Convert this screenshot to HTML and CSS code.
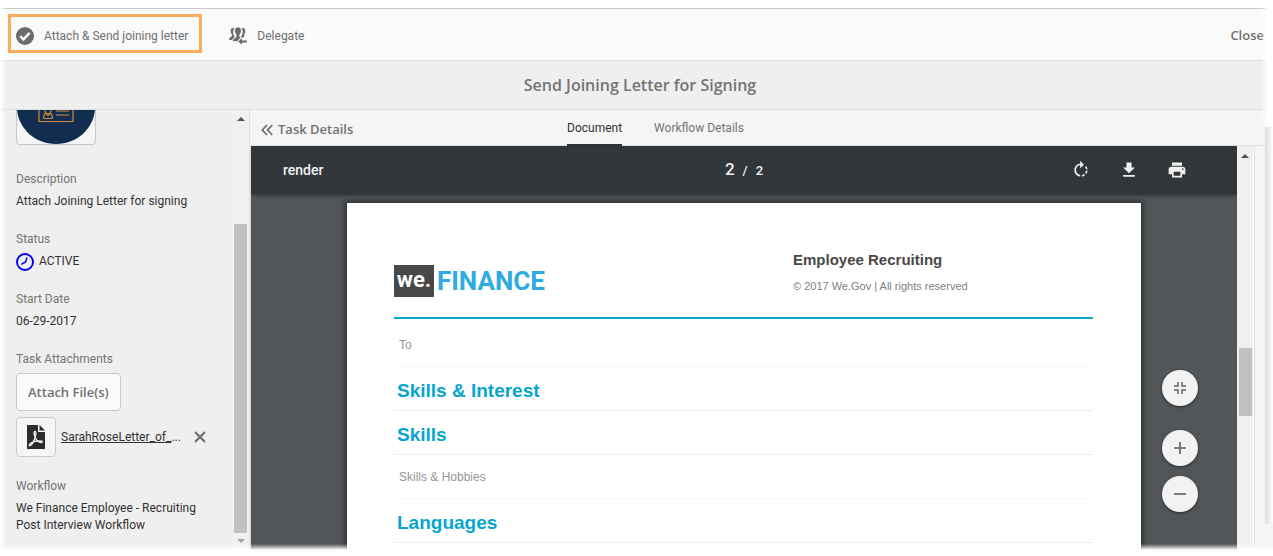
FILE: index.html
```html
<!DOCTYPE html>
<html lang="en">
<head>
<meta charset="utf-8">
<title>Send Joining Letter for Signing</title>
<link rel="stylesheet" href="styles.css">
</head>
<body>
<div class="app">
  <header class="actions">
    <button class="action action-highlight" type="button">
      <svg class="icon" viewBox="0 0 18 18" aria-hidden="true"><circle cx="9" cy="9" r="9" fill="#6b6b6b"/><path d="M4.2 9.2l3.2 3.2 6.3-6.6" fill="none" stroke="#fafafa" stroke-width="2.5"/></svg>
      <span>Attach &amp; Send joining letter</span>
    </button>
    <button class="action" type="button">
      <svg class="icon" viewBox="0 0 18 18" aria-hidden="true"><g fill="#6b6b6b"><path d="M4.500.8C2.600.8 1.500 2 1.700 4.200c.1 1.500.5 2.500 1.200 3.300.3 1.400-.2 2-1.200 2.500C.6 10.600.2 11.600 0 13h3.300c.5-1.600 1.700-2.200 2.600-2.800C4 7.800 3.400 4.200 5.200.9z"/><path d="M13.500.8c1.900 0 3 1.200 2.800 3.400-.1 1.500-.5 2.500-1.200 3.300-.2 1.100 0 1.700.6 2.100l-2.200 1.200-1.700-.8c1.900-2.200 2.700-5.900 1-9.100z"/><path d="M9 0c2.500 0 3.600 1.700 3.300 4.100-.2 1.700-.7 2.900-1.500 3.800-.3 1.400 0 2.200.9 2.700L8.500 14.500H3.600c.2-2 .6-2.700 1.900-3.300 1.300-.7 2-1.300 1.700-3.300-.8-.9-1.300-2.100-1.500-3.800C5.400 1.700 6.500 0 9 0z" stroke="#fafafa" stroke-width=".7"/><path d="M9 14.500l4-4v2.700h5v2.600h-5V18z" stroke="#fafafa" stroke-width=".4"/></g></svg>
      <span>Delegate</span>
    </button>
    <button class="close" type="button">Close</button>
  </header>

  <div class="title-bar"><h1>Send Joining Letter for Signing</h1></div>

  <div class="workspace">
    <aside class="sidebar">
      <div class="details">
        <div class="thumb">
          <svg viewBox="0 0 78 34" aria-hidden="true"><path d="M0 0h78C76 19 60 34 39 34S2 19 0 0z" fill="#112e51"/><g fill="none" stroke="#d9893a" stroke-width="1.200"><path d="M22 0v11.500h34V0M39 1h13M39 5h13"/><circle cx="31" cy="1" r="3"/><path d="M29 3.500c-3 1-2.500 4-2 5h8c.5-1 1-4-2-5l-2 2z"/></g></svg>
        </div>
        <section class="field">
          <h2>Description</h2>
          <p>Attach Joining Letter for signing</p>
        </section>
        <section class="field">
          <h2>Status</h2>
          <p class="status"><svg class="icon" viewBox="0 0 18 18" aria-hidden="true"><g fill="none" stroke="#0000f5"><circle cx="9" cy="9" r="8" stroke-width="1.900"/><path d="M11 4.500L9.600 9 5.300 11.300" stroke-width="1.500"/></g></svg>ACTIVE</p>
        </section>
        <section class="field">
          <h2>Start Date</h2>
          <p>06-29-2017</p>
        </section>
        <section class="field">
          <h2>Task Attachments</h2>
          <button class="attach" type="button">Attach File(s)</button>
          <div class="file">
            <span class="file-type"><svg viewBox="0 0 20 24" aria-hidden="true"><path d="M1 0h11v7h7v17H1z" fill="#2c2c2c"/><path d="M13.500 0L19 5.500h-5.500z" fill="#2c2c2c"/><path d="M8.600 6.500c2-.3 1.300 3.300.7 5.200-1 3.300-3 7.500-4.700 8.800-1.300.9-2-.6-.6-1.800 2.400-2 7.500-3.100 10.800-2.800 2.300.3 1.500 2-.3 1.500-2.300-.6-4.500-3.100-5.500-5.500-.7-1.800-1.200-5-.4-5.400z" fill="none" stroke="#f5f5f5" stroke-width="1.300"/></svg></span>
            <a class="file-name" href="#file"><u>SarahRoseLetter_of_</u>...</a>
            <button class="remove" type="button" aria-label="Remove attachment"><svg viewBox="0 0 12 12" aria-hidden="true"><path d="M1 1l10 10M11 1L1 11" stroke="#6b6b6b" stroke-width="2"/></svg></button>
          </div>
        </section>
        <section class="field">
          <h2>Workflow</h2>
          <p>We Finance Employee - Recruiting Post Interview Workflow</p>
        </section>
      </div>
      <div class="scroll scroll-side" aria-hidden="true">
        <svg viewBox="0 0 8 4"><path d="M0 4l4-4 4 4z" fill="#505050"/></svg>
        <div class="thumb-bar"></div>
        <svg viewBox="0 0 8 4"><path d="M0 0l4 4 4-4z" fill="#a3a3a3"/></svg>
      </div>
    </aside>

    <main class="main">
      <nav class="tabs">
        <a class="back" href="#details"><svg viewBox="0 0 12 12" aria-hidden="true"><path d="M6 1L1.300 6 6 11M11.300 1L6.600 6l4.700 5" fill="none" stroke="#6b6b6b" stroke-width="1.700"/></svg>Task Details</a>
        <div class="tab-list">
          <a class="tab tab-active" href="#document">Document</a>
          <a class="tab" href="#workflow">Workflow Details</a>
        </div>
      </nav>
      <div class="frame">
        <div class="viewer">
          <div class="toolbar">
            <span class="doc-name">render</span>
            <span class="pages"><b>2</b><span>/</span><span>2</span></span>
            <div class="tools">
              <button type="button" aria-label="Rotate"><svg viewBox="0 0 24 24"><path fill="#f1f1f1" d="M15.550 5.550L11 1v3.070C7.060 4.560 4 7.920 4 12s3.050 7.440 7 7.930v-2.020c-2.840-.48-5-2.940-5-5.910s2.160-5.430 5-5.910V10l4.550-4.450zM19.930 11c-.17-1.390-.72-2.730-1.620-3.890l-1.420 1.420c.54.75.88 1.600 1.020 2.470h2.020zM13 17.900v2.020c1.390-.17 2.740-.71 3.900-1.610l-1.440-1.440c-.75.54-1.590.89-2.460 1.030zm3.890-2.420l1.420 1.410c.9-1.160 1.450-2.500 1.620-3.890h-2.020c-.14.87-.48 1.720-1.020 2.480z"/></svg></button>
              <button type="button" aria-label="Download"><svg viewBox="0 0 24 24"><path fill="#f1f1f1" d="M19 9h-4V3H9v6H5l7 7 7-7zM5 18v2h14v-2H5z"/></svg></button>
              <button type="button" aria-label="Print"><svg viewBox="0 0 24 24"><path fill="#f1f1f1" d="M19 8H5c-1.660 0-3 1.340-3 3v6h4v4h12v-4h4v-6c0-1.660-1.340-3-3-3zm-3 11H8v-5h8v5zm3-7c-.55 0-1-.45-1-1s.45-1 1-1 1 .45 1 1-.45 1-1 1zm-1-9H6v4h12V3z"/></svg></button>
            </div>
          </div>
          <article class="sheet">
            <header class="letterhead">
              <div class="logo"><span class="logo-we">we.</span><span class="logo-name">FINANCE</span></div>
              <div class="org"><h2>Employee Recruiting</h2><p>© 2017 We.Gov | All rights reserved</p></div>
            </header>
            <p class="line line-to">To</p>
            <h3>Skills &amp; Interest</h3>
            <h3>Skills</h3>
            <p class="line">Skills &amp; Hobbies</p>
            <h3>Languages</h3>
          </article>
          <div class="zoom">
            <button class="zoom-fit" type="button" aria-label="Fit to page"><svg viewBox="0 0 12 12"><path d="M0 4h4V0M12 4H8V0M0 8h4v4M12 8H8v4" fill="none" stroke="#666" stroke-width="1.500"/></svg></button>
            <button type="button" aria-label="Zoom in"><svg viewBox="0 0 12 12"><path d="M0 6h12M6 0v12" stroke="#666" stroke-width="1.700"/></svg></button>
            <button type="button" aria-label="Zoom out"><svg viewBox="0 0 12 12"><path d="M0 6h12" stroke="#666" stroke-width="1.700"/></svg></button>
          </div>
        </div>
        <div class="scroll scroll-doc" aria-hidden="true">
          <svg viewBox="0 0 8 4"><path d="M0 4l4-4 4 4z" fill="#505050"/></svg>
          <div class="thumb-bar"></div>
        </div>
      </div>
    </main>
    <div class="edge"></div>
  </div>
  <div class="fade fade-left"></div>
  <div class="fade fade-right"></div>
  <div class="fade fade-bottom"></div>
</div>
</body>
</html>
```
FILE: styles.css
```css
* { box-sizing: border-box; }
body { margin: 0; background: #fff; color: #323232; font: 12px/17px Roboto, "Open Sans", sans-serif; }
h1, h2, h3, p { margin: 0; }
button { margin: 0; padding: 0; border: 0; background: none; color: inherit; font: inherit; }
a { color: inherit; text-decoration: none; }
svg { display: block; flex: none; }
.icon { width: 18px; height: 18px; }

.app { position: relative; height: 100vh; padding: 8px 0 6px; display: flex; flex-direction: column; }

.actions { flex: none; display: flex; align-items: center; height: 53px; padding: 0 9px 2px 8px; background: #fafafa; border-top: 1px solid #c8c8c8; border-bottom: 1px solid #dedede; color: #707070; }
.action { display: flex; align-items: center; gap: 10px; height: 39px; padding: 5px 3px 0; margin-left: 24px; }
.action-highlight { margin: 0; padding: 5px 11px 0 5px; border: 3px solid #fbad5b; }
.close, .back, .attach, .title-bar h1 { font-family: "Open Sans", "Noto Sans", sans-serif; font-weight: 600; }
.close { margin-left: auto; padding-top: 3px; font-size: 13px; }

.title-bar { flex: none; height: 49px; padding-left: 7px; display: flex; align-items: center; justify-content: center; background: #efefef; border-bottom: 1px solid #dedede; }
.title-bar h1 { font-size: 16px; line-height: 24px; color: #747474; }

.workspace { flex: 1; min-height: 0; display: flex; background: #f5f5f5; }
.sidebar { flex: none; width: 250px; display: flex; background: #efefef; border-right: 1px solid #dedede; overflow: hidden; }
.details { flex: 1; min-width: 0; padding: 0 32px 0 16px; }
.thumb { width: 80px; height: 35px; margin-bottom: 26px; border: 1px solid #c8c8c8; border-top: 0; border-radius: 0 0 4px 4px; background: #f5f5f5; }
.thumb svg { width: 78px; height: 34px; }
.field { margin-bottom: 21px; }
.field h2 { font: inherit; color: #747474; margin-bottom: 5px; }
.status { display: flex; align-items: center; gap: 5px; height: 17px; }
.attach { display: block; height: 38px; padding: 0 11px; border: 1px solid #cacaca; border-radius: 4px; background: #fafafa; color: #707070; font-size: 13px; }
.file { display: flex; align-items: center; margin-top: 6px; }
.file-type { flex: none; display: grid; place-items: center; width: 40px; height: 40px; margin-right: 5px; border: 1px solid #cacaca; border-radius: 4px; background: #f5f5f5; }
.file-type svg { width: 20px; height: 24px; }
.file-name { flex: none; min-width: 121px; white-space: nowrap; }
.remove { margin-left: 12px; }
.remove svg { width: 12px; height: 12px; }

.scroll { flex: none; display: flex; flex-direction: column; align-items: center; background: #f0f0f0; }
.scroll svg { width: 8px; height: 4px; }
.thumb-bar { width: 13px; background: #c1c1c1; }
.scroll-side { width: 17px; padding: 7px 0 7px; justify-content: space-between; }
.scroll-side .thumb-bar { height: 309px; margin-top: auto; margin-bottom: 6px; }
.scroll-doc { width: 17px; padding-top: 8px; border-right: 1px solid #fafafa; }
.scroll-doc .thumb-bar { height: 68px; margin-top: 190px; }

.main { flex: 1; min-width: 0; display: flex; flex-direction: column; }
.tabs { flex: none; display: grid; grid-template-columns: 3fr auto 5fr; height: 36px; padding: 0 11px; border-bottom: 1px solid #dedede; }
.back { display: flex; align-items: center; gap: 5px; padding-top: 3px; color: #707070; font-size: 13px; }
.back svg { width: 12px; height: 12px; }
.tab-list { display: flex; gap: 32px; height: 36px; }
.tab { padding-top: 10px; color: #747474; }
.tab-active { color: #323232; border-bottom: 2px solid #323232; }

.frame { flex: 1; min-height: 0; display: flex; margin-right: 10px; border-left: 1px solid #dedede; border-right: 1px solid #dedede; }
.viewer { position: relative; flex: 1; min-width: 0; overflow: hidden; background: #525659; }
.toolbar { position: relative; display: grid; grid-template-columns: 1fr auto 1fr; align-items: center; height: 48px; padding: 0 32px; background: #323639; box-shadow: 0 1px 4px rgba(0, 0, 0, .5); color: #f1f1f1; }
.doc-name { font-size: 14px; font-weight: 500; }
.pages { display: flex; align-items: baseline; gap: 8px; font-size: 13px; font-weight: 500; }
.pages b { font-size: 17px; font-weight: 500; }
.tools { display: flex; justify-content: flex-end; gap: 28px; margin-right: 18px; }
.tools svg { width: 20px; height: 20px; }

.sheet { width: 794px; max-width: 94%; height: 100%; margin: 9px auto 0; padding: 0 48px 0 47px; background: #fff; box-shadow: 0 0 6px 2px rgba(0, 0, 0, .45); font-family: "Liberation Sans", Arial, sans-serif; color: #969696; }
.letterhead { display: flex; justify-content: space-between; height: 116px; padding-top: 46px; border-bottom: 2px solid #06a5d0; }
.logo { display: flex; align-items: flex-end; gap: 3px; height: 48px; font-family: Roboto, sans-serif; font-weight: 700; }
.logo-we { width: 40px; height: 32px; background: #484848; color: #fff; font-size: 22px; line-height: 29px; text-align: center; }
.logo-name { color: #2eaae4; font-size: 26px; line-height: 32px; }
.org { width: 300px; }
.org h2 { font-size: 15px; line-height: 22px; color: #484848; }
.org p { margin-top: 7px; font-size: 11px; line-height: 16px; color: #808080; }
.line { height: 44px; padding: 14px 5px 0; font-size: 12px; line-height: 16px; border-bottom: 1px solid #f8f8f8; }
.line-to { height: 48px; padding-top: 18px; }
.sheet h3 { height: 44px; padding: 12px 3px 0; font-size: 19px; line-height: 24px; color: #06a5d0; border-bottom: 1px solid #e8eff0; }

.zoom { position: absolute; right: 39px; bottom: 38px; display: grid; gap: 10px; }
.zoom button { display: grid; place-items: center; width: 36px; height: 36px; border-radius: 50%; background: #f2f2f2; box-shadow: 0 1px 3px rgba(0, 0, 0, .5); }
.zoom svg { width: 12px; height: 12px; }
.zoom .zoom-fit { margin-bottom: 14px; }

.edge { flex: none; width: 8px; margin: 17px 0 26px; background: linear-gradient(90deg, #dcdcdc, #fff); }
.fade { position: absolute; pointer-events: none; }
.fade-left { top: 0; bottom: 0; left: 0; width: 6px; background: linear-gradient(90deg, #fff, transparent); }
.fade-right { top: 0; height: 127px; right: 0; width: 12px; background: linear-gradient(270deg, #fff 40%, transparent); }
.fade-bottom { left: 0; right: 0; bottom: 6px; height: 6px; background: linear-gradient(0deg, #fff, transparent); }
```
